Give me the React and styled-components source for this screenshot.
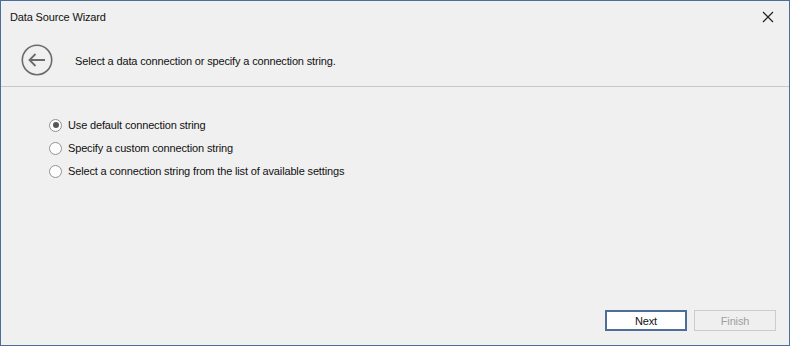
import React, { useState } from "react";
import styled, { createGlobalStyle } from "styled-components";

const GlobalStyle = createGlobalStyle`
  html, body {
    margin: 0;
    padding: 0;
    background: #f0f0f0;
  }
  * {
    box-sizing: border-box;
  }
`;

const Window = styled.div`
  width: 790px;
  height: 346px;
  border: 1px solid #4f6d99;
  background: #f0f0f0;
  display: flex;
  flex-direction: column;
  font-family: "Liberation Sans", Arial, sans-serif;
  font-size: 11px;
  letter-spacing: -0.15px;
  color: #111;
`;

const TitleBar = styled.div`
  height: 32px;
  display: flex;
  align-items: center;
  justify-content: space-between;
  padding: 0 14px 0 9px;
`;

const Title = styled.span`
  padding-bottom: 1px;
`;

const CloseButton = styled.button`
  border: none;
  background: none;
  padding: 0;
  width: 14px;
  height: 14px;
  display: flex;
  align-items: center;
  justify-content: center;
  cursor: pointer;
`;

const Header = styled.div`
  height: 54px;
  display: flex;
  align-items: center;
  padding: 1px 0 0 20px;
  gap: 22px;
  border-bottom: 1px solid #c8c8c8;
`;

const BackButton = styled.button`
  border: none;
  background: none;
  padding: 0;
  width: 32px;
  height: 32px;
  cursor: pointer;
`;

const HeaderText = styled.span`
  padding-top: 1px;
`;

const Body = styled.div`
  flex: 1;
  display: flex;
  flex-direction: column;
  gap: 7px;
  padding: 30px 0 0 48px;
`;

const RadioRow = styled.label`
  display: flex;
  align-items: center;
  gap: 6px;
  height: 16px;
  cursor: default;
`;

const RadioCircle = styled.span`
  width: 13px;
  height: 13px;
  border-radius: 50%;
  border: 1px solid #939393;
  background: #fdfdfd;
  display: flex;
  align-items: center;
  justify-content: center;

  &::after {
    content: "";
    width: 6px;
    height: 6px;
    border-radius: 50%;
    background: ${(p) => (p.$checked ? "#555555" : "transparent")};
  }
`;

const Footer = styled.div`
  display: flex;
  justify-content: flex-end;
  gap: 7px;
  padding: 0 13px 14px 0;
`;

const Button = styled.button`
  width: 82px;
  height: 21px;
  font-family: "Liberation Sans", Arial, sans-serif;
  font-size: 11px;
  letter-spacing: -0.15px;
  background: ${(p) => (p.$primary ? "#ffffff" : "#efefef")};
  color: ${(p) => (p.disabled ? "#a0a0a0" : "#111")};
  border: ${(p) => (p.$primary ? "2px solid #4f6d99" : "1px solid #cccccc")};
  padding: 0;
`;

const options = [
  "Use default connection string",
  "Specify a custom connection string",
  "Select a connection string from the list of available settings",
];

export default function App() {
  const [selected, setSelected] = useState(0);

  return (
    <>
      <GlobalStyle />
      <Window>
        <TitleBar>
          <Title>Data Source Wizard</Title>
          <CloseButton aria-label="Close">
            <svg width="12" height="12" viewBox="0 0 12 12">
              <path d="M1 1L11 11M11 1L1 11" stroke="#222" strokeWidth="1.2" />
            </svg>
          </CloseButton>
        </TitleBar>
        <Header>
          <BackButton aria-label="Back">
            <svg width="32" height="32" viewBox="0 0 32 32">
              <circle cx="16" cy="16" r="14.7" fill="none" stroke="#6b6b6b" strokeWidth="1.6" />
              <path d="M8.5 16H24M14.5 10L8.5 16L14.5 22" fill="none" stroke="#6b6b6b" strokeWidth="1.8" />
            </svg>
          </BackButton>
          <HeaderText>Select a data connection or specify a connection string.</HeaderText>
        </Header>
        <Body>
          {options.map((o, i) => (
            <RadioRow key={o} onClick={() => setSelected(i)}>
              <RadioCircle $checked={selected === i} />
              {o}
            </RadioRow>
          ))}
        </Body>
        <Footer>
          <Button $primary>Next</Button>
          <Button disabled>Finish</Button>
        </Footer>
      </Window>
    </>
  );
}
